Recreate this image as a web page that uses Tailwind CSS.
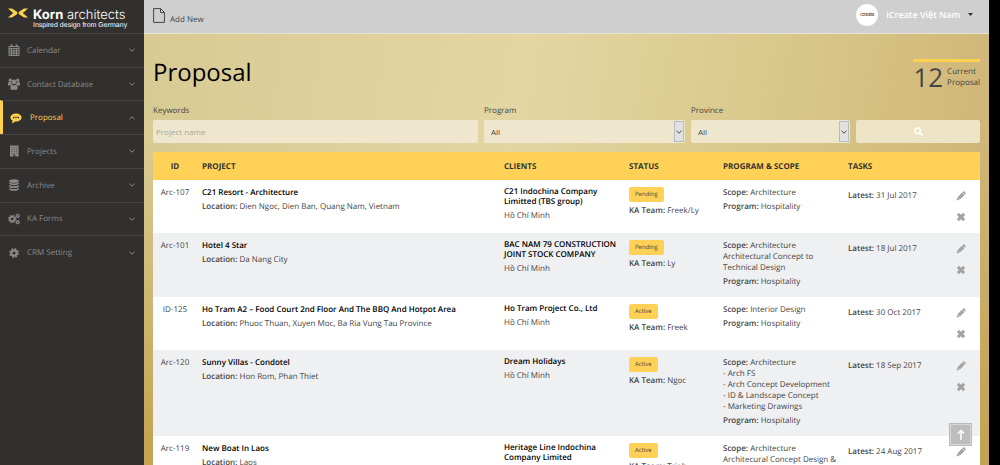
<!DOCTYPE html>
<html lang="en">
<head>
    <meta charset="UTF-8">
    <meta name="viewport" content="width=device-width, initial-scale=1.0">
    <title>Proposal - Korn architects</title>
    <script src="https://cdn.jsdelivr.net/npm/@tailwindcss/browser@4"></script>
</head>
<body class="bg-black font-['Open_Sans',sans-serif] text-[8px] leading-[11px] text-[#444] [text-rendering:geometricPrecision]">
    <!-- Shared icons -->
    <svg class="hidden">
        <symbol id="i-down" viewBox="0 0 8 8"><path d="M1.5 2.8 4 5.2l2.5-2.4" fill="none" stroke="currentColor" stroke-width="1"/></symbol>
        <symbol id="i-up" viewBox="0 0 8 8"><path d="M1.5 5.2 4 2.8l2.5 2.4" fill="none" stroke="currentColor" stroke-width="1"/></symbol>
        <symbol id="i-pencil" viewBox="0 0 16 16"><path fill="currentColor" d="M1 15l1-4.6 3.6 3.6zM2.4 9.8 9.8 2.4l3.8 3.8-7.4 7.4zM10.3 1.900l1.100-1.100q1-.9 2 0l1.800 1.800q.9 1 0 2l-1.100 1.100z"/></symbol>
        <symbol id="i-times" viewBox="0 0 16 16"><path d="M3 3l10 10M13 3 3 13" stroke="currentColor" stroke-width="4.6"/></symbol>
    </svg>

    <div class="flex h-screen overflow-hidden pr-[11px]">
        <!-- Sidebar -->
        <aside class="w-36 shrink-0 bg-[#31302e] text-[#8b8a88]">
            <a href="#" class="flex h-[33px] items-center gap-[5px] pl-2">
                <svg class="mb-2 h-[10px] w-5" viewBox="0 0 20 10" fill="#fdd04e">
                    <path d="M0 .5h4L9.300 4v2L4 9.500H0L5.200 5zM20 .5h-4L10.700 4v2L16 9.500h4L14.800 5z"/>
                </svg>
                <span class="pt-1 text-white">
                    <span class="block font-['Inter',sans-serif] text-[13px] leading-[13px]"><b>Korn</b> <span class="font-light">architects</span></span>
                    <span class="block font-['Liberation_Sans',sans-serif] text-[7px] leading-[7px]">Inspired design from Germany</span>
                </span>
            </a>
            <nav class="grid h-[236px] grid-rows-7">
                <a href="#" class="flex items-center gap-[7px] border-t border-[#454442] px-2">
                    <svg class="size-3" viewBox="0 0 12 12" fill="none" stroke="currentColor"><path d="M1 2.5h10v9H1zM1 4.6h10M1 7h10M1 9.2h10M3.5 4.6v7M6 4.6v7M8.5 4.6v7"/><path d="M3.5.3v3M8.5.3v3" stroke-width="1.6"/></svg>
                    <span class="flex-1">Calendar</span><svg class="size-2"><use href="#i-down"/></svg>
                </a>
                <a href="#" class="flex items-center gap-[7px] border-t border-[#454442] px-2">
                    <svg class="size-3" viewBox="0 0 12 12" fill="currentColor"><circle cx="2.3" cy="2.2" r="1.6"/><circle cx="9.7" cy="2.2" r="1.6"/><circle cx="6" cy="3.9" r="2.3"/><path d="M0 7V5.4Q0 4 1.3 4h1.9q0 1.8 1 2.6-1 .2-1.6.9H.7Q0 7.500 0 7zM12 7V5.400Q12 4 10.700 4H8.800q0 1.800-1 2.600 1 .2 1.600.9h1.900Q12 7.500 12 7zM2.400 10.400q0-3.600 1.900-3.600.8.600 1.700.6t1.700-.6q1.900 0 1.900 3.600 0 1.400-1.300 1.400H3.700q-1.300 0-1.300-1.400z"/></svg>
                    <span class="flex-1">Contact Database</span><svg class="size-2"><use href="#i-down"/></svg>
                </a>
                <a href="#" class="flex items-center gap-[8px] border-t border-l-3 border-[#454442] border-l-[#fdd04e] pr-2 pl-[7px] text-[#fdd04e]">
                    <svg class="size-3" viewBox="0 0 12 12"><path fill="currentColor" d="M6 1.500c3.200 0 5.600 1.700 5.600 4S9.200 9.500 6 9.500l-1-.1Q3.600 10.900 1.600 11q1-.9 1-2.300Q.4 7.600.4 5.500c0-2.300 2.400-4 5.600-4z"/><path d="M3 4.800h1.400v1.400H3zM5.300 4.800h1.400v1.400H5.300zM7.600 4.800H9v1.400H7.600z" fill="#31302e"/></svg>
                    <span class="flex-1">Proposal</span><svg class="size-2 text-[#8b8a88]"><use href="#i-up"/></svg>
                </a>
                <a href="#" class="flex items-center gap-[7px] border-t border-[#454442] px-2">
                    <svg class="size-3" viewBox="0 0 12 12"><path fill="currentColor" d="M2 .5h8.500v11H2z"/><path d="M4 2.200v6.600M6.200 2.200v6.600M8.400 2.200v6.600" stroke="#31302e" stroke-width=".8" stroke-dasharray=".8 1.100"/><path d="M5.200 9.600h2v2h-2z" fill="#31302e"/></svg>
                    <span class="flex-1">Projects</span><svg class="size-2"><use href="#i-down"/></svg>
                </a>
                <a href="#" class="flex items-center gap-[7px] border-t border-[#454442] px-2">
                    <svg class="size-3" viewBox="0 0 12 12" fill="currentColor"><ellipse cx="6" cy="2" rx="4.800" ry="1.800"/><path d="M1.200 3.300q4.800 2.400 9.600 0v1.300Q10 6.200 6 6.200T1.200 4.600zM1.200 6.100q4.800 2.400 9.600 0v1.300Q10 9 6 9T1.200 7.400zM1.200 8.900q4.800 2.400 9.600 0v1.300Q10 11.800 6 11.800t-4.800-1.600z"/></svg>
                    <span class="flex-1">Archive</span><svg class="size-2"><use href="#i-down"/></svg>
                </a>
                <a href="#" class="flex items-center gap-[7px] border-t border-[#454442] px-2">
                    <svg class="size-3" viewBox="0 0 12 12" fill="none" stroke="currentColor"><circle cx="4.200" cy="6" r="2.300" stroke-width="1.700"/><circle cx="4.200" cy="6" r="3.600" stroke-width="1.200" stroke-dasharray="1.500 1.330"/><circle cx="9.800" cy="2.800" r="1.300" stroke-width="1.200"/><circle cx="9.800" cy="2.800" r="2" stroke-width=".8" stroke-dasharray=".9 1.190"/><circle cx="9.800" cy="9.200" r="1.300" stroke-width="1.200"/><circle cx="9.800" cy="9.200" r="2" stroke-width=".8" stroke-dasharray=".9 1.190"/></svg>
                    <span class="flex-1">KA Forms</span><svg class="size-2"><use href="#i-down"/></svg>
                </a>
                <a href="#" class="flex items-center gap-[7px] border-t border-[#454442] px-2">
                    <svg class="size-3" viewBox="0 0 12 12" fill="none" stroke="currentColor"><circle cx="6" cy="6" r="2.700" stroke-width="2.200"/><circle cx="6" cy="6" r="4.200" stroke-width="1.500" stroke-dasharray="1.800 1.500"/></svg>
                    <span class="flex-1">CRM Setting</span><svg class="size-2"><use href="#i-down"/></svg>
                </a>
            </nav>
        </aside>

        <div class="flex min-w-0 flex-1 flex-col">
            <!-- Top bar -->
            <header class="flex h-[34px] shrink-0 items-center justify-between border-b border-[#e8e4d4] bg-[#cfcfcf] pr-4 pl-[9px]">
                <a href="#" class="flex items-end gap-[5px]">
                    <svg class="mb-[2px] h-[15px] w-3" viewBox="0 0 12 15" fill="none" stroke="#444"><path d="M.6.600h7l3.800 3.800v10H.6zM7.500.600v4h4"/></svg>
                    <span>Add New</span>
                </a>
                <button class="mb-1 flex items-center gap-2 text-[9px] font-semibold text-white">
                    <span class="flex size-[22px] items-center justify-center rounded-full bg-white font-['Inter',sans-serif] text-[4px] leading-none text-[#333]"><i class="text-[#e2401c]">i</i>Create</span>
                    <span>iCreate Việt Nam</span>
                    <svg class="h-[3px] w-[5px]" viewBox="0 0 5 3"><path d="M0 0h5L2.500 3z" fill="#333"/></svg>
                </button>
            </header>

            <main class="min-h-0 flex-1 overflow-hidden bg-[linear-gradient(to_bottom,transparent_25%,#c4a453_95%),linear-gradient(100deg,#d7ca92,#e3d6a3_42%,#dac98c_68%,#cdb273)] px-[9px]">
                <div class="flex h-[71px] items-start justify-between">
                    <h1 class="mt-5 text-[24px] leading-[38px] text-black">Proposal</h1>
                    <div class="mt-[25px] flex items-center gap-1 border-t-3 border-[#fdd04e]">
                        <span class="text-[26px] leading-[30px]">12</span>
                        <span>Current<br>Proposal</span>
                    </div>
                </div>

                <!-- Filters -->
                <form class="flex items-end gap-[6px]">
                    <div class="min-w-0 flex-1">
                        <label for="keywords" class="mb-1 block">Keywords</label>
                        <input id="keywords" type="text" placeholder="Project name" class="block h-[23px] w-full rounded-xs bg-[#efe7cd] px-[3px] placeholder:text-[#aaa693]">
                    </div>
                    <div class="relative w-[201px]">
                        <label for="program" class="mb-1 block">Program</label>
                        <select id="program" class="block h-[23px] w-full appearance-none rounded-xs bg-[#efe7cd] px-[7px]"><option>All</option></select>
                        <span class="pointer-events-none absolute right-px bottom-px flex h-[21px] w-[10px] items-center justify-center border border-[#b4bcc4] bg-[#e1e1e1]"><svg class="size-2"><use href="#i-down"/></svg></span>
                    </div>
                    <div class="relative w-[159px]">
                        <label for="province" class="mb-1 block">Province</label>
                        <select id="province" class="block h-[23px] w-full appearance-none rounded-xs bg-[#efe7cd] px-[7px]"><option>All</option></select>
                        <span class="pointer-events-none absolute right-px bottom-px flex h-[21px] w-[10px] items-center justify-center border border-[#b4bcc4] bg-[#e1e1e1]"><svg class="size-2"><use href="#i-down"/></svg></span>
                    </div>
                    <button type="button" aria-label="Search" class="flex h-[23px] w-[124px] items-center justify-center rounded-xs bg-[#ede4c6]">
                        <svg class="size-[9px]" viewBox="0 0 9 9" fill="none" stroke="#fff" stroke-width="1.500"><circle cx="3.700" cy="3.700" r="2.800"/><path d="m5.800 5.800 2.600 2.600" stroke-width="1.800"/></svg>
                    </button>
                </form>

                <!-- Proposals -->
                <table class="mt-[9px] w-full table-fixed bg-white [&_b]:font-semibold [&_td]:px-[5px] [&_td]:pt-[7px] [&_td]:pb-[10px] [&_td]:align-top [&_th]:px-[5px]">
                    <thead class="bg-[#ffd257] text-left text-[#333]">
                        <tr class="h-7">
                            <th class="w-11 text-center">ID</th>
                            <th>PROJECT</th>
                            <th class="w-[125px]">CLIENTS</th>
                            <th class="w-[94px]">STATUS</th>
                            <th class="w-[125px]">PROGRAM &amp; SCOPE</th>
                            <th class="w-[99px]">TASKS</th>
                            <th class="w-[38px]"></th>
                        </tr>
                    </thead>
                    <tbody id="proposal-rows"></tbody>
                </table>
            </main>
        </div>
    </div>

    <a href="#" aria-label="Back to top" class="fixed right-7 bottom-[19px] flex size-[23px] items-center justify-center border border-[#bbb] bg-[#bdbdbd] outline outline-[#d8d8d8] -outline-offset-2">
        <svg class="h-[11px] w-2" viewBox="0 0 8 11" fill="none" stroke="#fff" stroke-width="1.500"><path d="M4 11V1.500M1 4.500l3-3 3 3"/></svg>
    </a>

    <script>
        const proposals = [
            { id: 'Arc-107', project: 'C21 Resort - Architecture', location: 'Dien Ngoc, Dien Ban, Quang Nam, Vietnam', client: 'C21 Indochina Company Limitted (TBS group)', city: 'Hồ Chí Minh', status: 'Pending', team: 'Freek/Ly', scope: 'Architecture', date: '31 Jul 2017' },
            { id: 'Arc-101', project: 'Hotel 4 Star', location: 'Da Nang City', client: 'BAC NAM 79 CONSTRUCTION JOINT STOCK COMPANY', city: 'Hồ Chí Minh', status: 'Pending', team: 'Ly', scope: 'Architecture<br>Architectural Concept to Technical Design', date: '18 Jul 2017' },
            { id: 'ID-125', project: 'Ho Tram A2 – Food Court 2nd Floor And The BBQ And Hotpot Area', location: 'Phuoc Thuan, Xuyen Moc, Ba Ria Vung Tau Province', client: 'Ho Tram Project Co., Ltd', city: 'Hồ Chí Minh', status: 'Active', team: 'Freek', scope: 'Interior Design', date: '30 Oct 2017' },
            { id: 'Arc-120', project: 'Sunny Villas - Condotel', location: 'Hon Rom, Phan Thiet', client: 'Dream Holidays', city: 'Hồ Chí Minh', status: 'Active', team: 'Ngọc', scope: 'Architecture<br>- Arch FS<br>- Arch Concept Development<br>- ID &amp; Landscape Concept<br>- Marketing Drawings', date: '18 Sep 2017' },
            { id: 'Arc-119', project: 'New Boat In Laos', location: 'Laos', client: 'Heritage Line Indochina Company Limited', city: 'Hồ Chí Minh', status: 'Active', team: 'Trinh', scope: 'Architecture<br>Architecural Concept Design &amp; Interior Concept', date: '24 Aug 2017' }
        ];

        document.getElementById('proposal-rows').innerHTML = proposals.map(p => `
            <tr class="h-[53px] even:bg-[#eff0f2]">
                <td class="text-center">${p.id}</td>
                <td>
                    <a href="#" class="block font-semibold text-black">${p.project}</a>
                    <p class="mt-[3px]"><b>Location:</b> ${p.location}</p>
                </td>
                <td>
                    <a href="#" class="block leading-[10px] font-semibold text-black">${p.client}</a>
                    <p class="mt-[3px]">${p.city}</p>
                </td>
                <td>
                    <span class="inline-block rounded-xs bg-[#ffd257] px-[6px] text-[6px] leading-[15px]">${p.status}</span>
                    <p class="mt-[3px]"><b>KA Team:</b> ${p.team}</p>
                </td>
                <td>
                    <p><b>Scope:</b> ${p.scope}</p>
                    <p class="mt-[3px]"><b>Program:</b> Hospitality</p>
                </td>
                <td><p class="mt-[3px]"><b>Latest:</b> ${p.date}</p></td>
                <td>
                    <div class="flex flex-col items-center gap-[11px] pt-1 text-[#a3a3a3]">
                        <button aria-label="Edit"><svg class="size-[10px]"><use href="#i-pencil"/></svg></button>
                        <button aria-label="Delete"><svg class="size-[10px]"><use href="#i-times"/></svg></button>
                    </div>
                </td>
            </tr>`).join('');
    </script>
</body>
</html>
